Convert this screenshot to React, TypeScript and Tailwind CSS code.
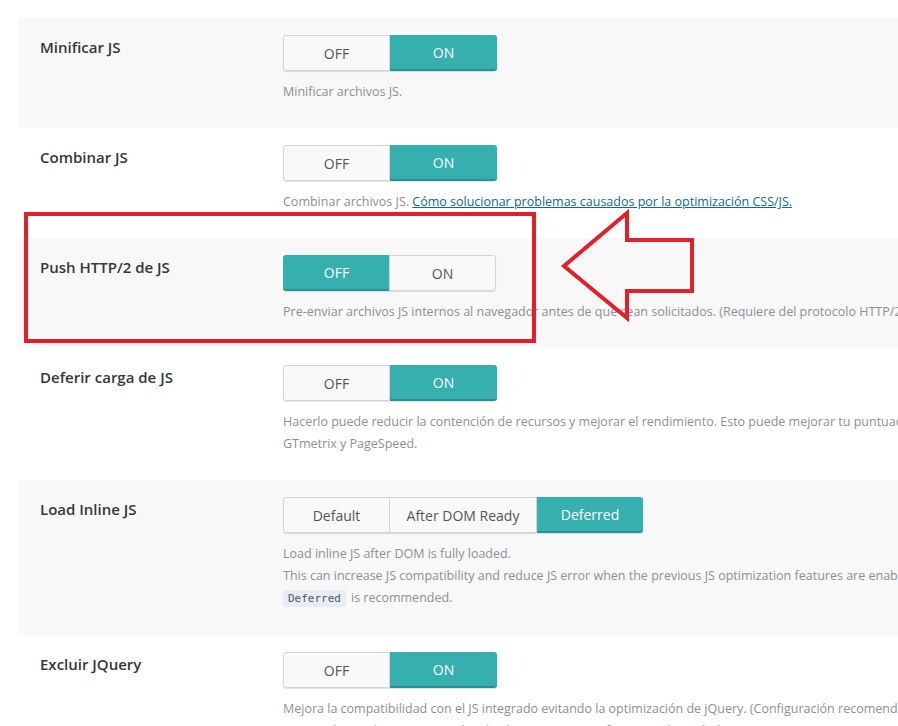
import React from "react";

type Option = { label: string; width: string };

const onOff: Option[] = [
  { label: "OFF", width: "w-[107px]" },
  { label: "ON", width: "w-[107px]" },
];

// Segmented button group, one option highlighted
const Segmented = ({ options, active }: { options: Option[]; active: number }) => {
  return (
    <div className="flex h-[36px] rounded-[3px] shadow-[0_1px_1px_rgba(0,0,0,0.12)]">
      {options.map((opt, i) => {
        const isActive = i === active;
        const first = i === 0;
        const last = i === options.length - 1;
        return (
          <div
            key={opt.label}
            className={`${opt.width} flex items-center justify-center text-[14px] ${
              isActive
                ? "bg-[#36afaf] text-white border-b-2 border-b-[#2a9090] pt-[1px]"
                : "bg-[#f9f9f9] text-[#555] border border-[#d4d4d4]"
            } ${first ? "rounded-l-[3px]" : ""} ${last ? "rounded-r-[3px]" : ""} ${
              !isActive && i > 0 ? "-ml-px" : ""
            }`}
          >
            {opt.label}
          </div>
        );
      })}
    </div>
  );
};

const Row = ({
  label,
  gray,
  children,
}: {
  label: string;
  gray?: boolean;
  children: React.ReactNode;
}) => (
  <div className={`flex pl-[22px] pt-[17px] pb-[25px] ${gray ? "bg-[#f8f8f8]" : "bg-white"}`}>
    <div className="w-[243px] shrink-0 text-[15px] font-semibold text-[#32373c] leading-[24px]">{label}</div>
    <div className="flex flex-col items-start min-w-0">{children}</div>
  </div>
);

const Desc = ({ children }: { children: React.ReactNode }) => (
  <p className="text-[12.5px] leading-[22px] text-[#8c8f94] whitespace-nowrap">{children}</p>
);

export default function App() {
  return (
    <div
      className="relative w-[898px] h-[726px] overflow-hidden bg-white"
      style={{ fontFamily: '"Open Sans", "Noto Sans", sans-serif' }}
    >
      <div className="ml-[18px] mt-[18px]">
        <Row label="Minificar JS" gray>
          <Segmented options={onOff} active={1} />
          <div className="mt-[10px]">
            <Desc>Minificar archivos JS.</Desc>
          </div>
        </Row>

        <Row label="Combinar JS">
          <Segmented options={onOff} active={1} />
          <div className="mt-[10px]">
            <Desc>
              Combinar archivos JS.{" "}
              <a href="#" className="text-[#0b6a9a] underline">
                Cómo solucionar problemas causados por la optimización CSS/JS.
              </a>
            </Desc>
          </div>
        </Row>

        <Row label="Push HTTP/2 de JS" gray>
          <Segmented options={onOff} active={0} />
          <div className="mt-[10px]">
            <Desc>
              Pre-enviar archivos JS internos al navegador antes de que sean solicitados. (Requiere del protocolo
              HTTP/2).
            </Desc>
          </div>
        </Row>

        <Row label="Deferir carga de JS">
          <Segmented options={onOff} active={1} />
          <div className="mt-[10px]">
            <Desc>
              Hacerlo puede reducir la contención de recursos y mejorar el rendimiento. Esto puede mejorar tu
              puntuación en
            </Desc>
            <Desc>GTmetrix y PageSpeed.</Desc>
          </div>
        </Row>

        <Row label="Load Inline JS" gray>
          <Segmented
            options={[
              { label: "Default", width: "w-[107px]" },
              { label: "After DOM Ready", width: "w-[148px]" },
              { label: "Deferred", width: "w-[106px]" },
            ]}
            active={2}
          />
          <div className="mt-[10px]">
            <Desc>Load inline JS after DOM is fully loaded.</Desc>
            <Desc>
              This can increase JS compatibility and reduce JS error when the previous JS optimization features are
              enabled.
            </Desc>
            <Desc>
              <code
                className="px-[5px] py-[2px] mr-[5px] rounded-[3px] bg-[#e6edf4] text-[#555] text-[11px]"
                style={{ fontFamily: '"DejaVu Sans Mono", monospace' }}
              >
                Deferred
              </code>
              is recommended.
            </Desc>
          </div>
        </Row>

        <Row label="Excluir JQuery">
          <Segmented options={onOff} active={1} />
          <div className="mt-[10px]">
            <Desc>
              Mejora la compatibilidad con el JS integrado evitando la optimización de jQuery. (Configuración
              recomendada)
            </Desc>
            <Desc>
              <span className="text-[#222]">▲</span> Hacerlo puede causar que el JS de algunos temas no funcione,{" "}
              <span className="text-[#e08a00]">desactívalo si encuentras errores.</span>
            </Desc>
          </div>
        </Row>
      </div>

      {/* highlight frame and pointer arrow */}
      <svg className="absolute left-0 top-0 pointer-events-none" width="898" height="726">
        <rect x="26" y="214" width="508" height="127" fill="none" stroke="#e3202a" strokeWidth="4" />
        <polygon
          points="564,266 627,213 627,240 692,240 692,291 627,291 627,318"
          fill="none"
          stroke="#e3202a"
          strokeWidth="4"
          strokeLinejoin="miter"
        />
      </svg>
    </div>
  );
}
